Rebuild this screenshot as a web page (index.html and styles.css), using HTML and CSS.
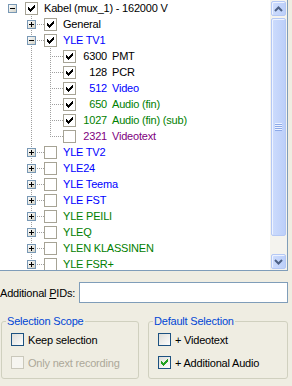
FILE: index.html
```html
<!DOCTYPE html>
<html lang="en">
<head>
    <meta charset="UTF-8">
    <title>Channel Selection</title>
    <link rel="stylesheet" href="styles.css">
</head>
<body>
    <svg class="defs" width="0" height="0">
        <defs>
            <linearGradient id="expg" x1="0" y1="0" x2="1" y2="1">
                <stop offset="0" stop-color="#ffffff"/>
                <stop offset="1" stop-color="#cfcfc4"/>
            </linearGradient>
            <linearGradient id="xpg" x1="0" y1="0" x2="1" y2="1">
                <stop offset="0" stop-color="#dcdcd7"/>
                <stop offset="1" stop-color="#ffffff"/>
            </linearGradient>
        </defs>
        <symbol id="tick" viewBox="0 0 13 13">
            <path d="M3 5h1v3H3zM4 6h1v3H4zM5 7h1v3H5zM6 6h1v3H6zM7 5h1v3H7zM8 4h1v3H8zM9 3h1v3H9z"/>
        </symbol>
        <symbol id="tree-on" viewBox="0 0 13 13">
            <rect x=".5" y=".5" width="12" height="12" fill="#fff" stroke="#a6a395"/>
            <use href="#tick" fill="#000"/>
        </symbol>
        <symbol id="tree-off" viewBox="0 0 13 13">
            <rect x=".5" y=".5" width="12" height="12" fill="#fff" stroke="#a6a395"/>
        </symbol>
        <symbol id="minus" viewBox="0 0 9 9">
            <rect x=".5" y=".5" width="8" height="8" fill="url(#expg)" stroke="#7898b5"/>
            <path d="M2 4h5v1H2z" fill="#000"/>
        </symbol>
        <symbol id="plus" viewBox="0 0 9 9">
            <rect x=".5" y=".5" width="8" height="8" fill="url(#expg)" stroke="#7898b5"/>
            <path d="M2 4h5v1H2zM4 2h1v5H4z" fill="#000"/>
        </symbol>
        <symbol id="xp-off" viewBox="0 0 13 13">
            <rect x=".5" y=".5" width="12" height="12" fill="url(#xpg)" stroke="#1c5180"/>
        </symbol>
        <symbol id="xp-on" viewBox="0 0 13 13">
            <rect x=".5" y=".5" width="12" height="12" fill="url(#xpg)" stroke="#1c5180"/>
            <use href="#tick" fill="#21a121"/>
        </symbol>
        <symbol id="xp-dis" viewBox="0 0 13 13">
            <rect x=".5" y=".5" width="12" height="12" fill="#f6f5f0" stroke="#cac8bb"/>
        </symbol>
    </svg>

    <div class="tree">
        <div class="nodes">
            <!-- root -->
            <div class="node">
                <span class="cell"><svg class="exp"><use href="#minus"/></svg></span>
                <span class="cb"><svg class="chk"><use href="#tree-on"/></svg></span>
                <span class="label">Kabel (mux_1) - 162000 V</span>
            </div>

            <!-- services -->
            <div class="node">
                <span class="cell"></span>
                <span class="cell t"><svg class="exp"><use href="#plus"/></svg></span>
                <span class="cb link"><svg class="chk"><use href="#tree-on"/></svg></span>
                <span class="label">General</span>
            </div>
            <div class="node blue">
                <span class="cell"></span>
                <span class="cell t"><svg class="exp"><use href="#minus"/></svg></span>
                <span class="cb link"><svg class="chk"><use href="#tree-on"/></svg></span>
                <span class="label">YLE TV1</span>
            </div>

            <!-- pids of YLE TV1 -->
            <div class="node">
                <span class="cell"></span><span class="cell v"></span><span class="cell t"></span>
                <span class="cb link"><svg class="chk"><use href="#tree-on"/></svg></span>
                <span class="label"><span class="pid">6300</span>PMT</span>
            </div>
            <div class="node">
                <span class="cell"></span><span class="cell v"></span><span class="cell t"></span>
                <span class="cb link"><svg class="chk"><use href="#tree-on"/></svg></span>
                <span class="label"><span class="pid">128</span>PCR</span>
            </div>
            <div class="node blue">
                <span class="cell"></span><span class="cell v"></span><span class="cell t"></span>
                <span class="cb link"><svg class="chk"><use href="#tree-on"/></svg></span>
                <span class="label"><span class="pid">512</span>Video</span>
            </div>
            <div class="node green">
                <span class="cell"></span><span class="cell v"></span><span class="cell t"></span>
                <span class="cb link"><svg class="chk"><use href="#tree-on"/></svg></span>
                <span class="label"><span class="pid">650</span>Audio (fin)</span>
            </div>
            <div class="node green">
                <span class="cell"></span><span class="cell v"></span><span class="cell t"></span>
                <span class="cb link"><svg class="chk"><use href="#tree-on"/></svg></span>
                <span class="label"><span class="pid">1027</span>Audio (fin) (sub)</span>
            </div>
            <div class="node purple">
                <span class="cell"></span><span class="cell v"></span><span class="cell l"></span>
                <span class="cb link"><svg class="chk"><use href="#tree-off"/></svg></span>
                <span class="label"><span class="pid">2321</span>Videotext</span>
            </div>

            <div class="node blue">
                <span class="cell"></span>
                <span class="cell t"><svg class="exp"><use href="#plus"/></svg></span>
                <span class="cb link"><svg class="chk"><use href="#tree-off"/></svg></span>
                <span class="label">YLE TV2</span>
            </div>
            <div class="node blue">
                <span class="cell"></span>
                <span class="cell t"><svg class="exp"><use href="#plus"/></svg></span>
                <span class="cb link"><svg class="chk"><use href="#tree-off"/></svg></span>
                <span class="label">YLE24</span>
            </div>
            <div class="node blue">
                <span class="cell"></span>
                <span class="cell t"><svg class="exp"><use href="#plus"/></svg></span>
                <span class="cb link"><svg class="chk"><use href="#tree-off"/></svg></span>
                <span class="label">YLE Teema</span>
            </div>
            <div class="node blue">
                <span class="cell"></span>
                <span class="cell t"><svg class="exp"><use href="#plus"/></svg></span>
                <span class="cb link"><svg class="chk"><use href="#tree-off"/></svg></span>
                <span class="label">YLE FST</span>
            </div>
            <div class="node green">
                <span class="cell"></span>
                <span class="cell t"><svg class="exp"><use href="#plus"/></svg></span>
                <span class="cb link"><svg class="chk"><use href="#tree-off"/></svg></span>
                <span class="label">YLE PEILI</span>
            </div>
            <div class="node green">
                <span class="cell"></span>
                <span class="cell t"><svg class="exp"><use href="#plus"/></svg></span>
                <span class="cb link"><svg class="chk"><use href="#tree-off"/></svg></span>
                <span class="label">YLEQ</span>
            </div>
            <div class="node green">
                <span class="cell"></span>
                <span class="cell t"><svg class="exp"><use href="#plus"/></svg></span>
                <span class="cb link"><svg class="chk"><use href="#tree-off"/></svg></span>
                <span class="label">YLEN KLASSINEN</span>
            </div>
            <div class="node green">
                <span class="cell"></span>
                <span class="cell l"><svg class="exp"><use href="#plus"/></svg></span>
                <span class="cb link"><svg class="chk"><use href="#tree-off"/></svg></span>
                <span class="label">YLE FSR+</span>
            </div>
        </div>

        <div class="scroll">
            <div class="sbtn">
                <svg class="arrow" viewBox="0 0 9 6"><path d="M1 5L4.5 1.5L8 5"/></svg>
            </div>
            <div class="thumb"><span class="grip"></span></div>
            <div class="track"></div>
            <div class="sbtn">
                <svg class="arrow" viewBox="0 0 9 6"><path d="M1 1L4.5 4.5L8 1"/></svg>
            </div>
        </div>
    </div>

    <div class="pids">
        <label class="pids-label" for="pids">Additional <u>P</u>IDs:</label>
        <input id="pids" class="pids-input" type="text">
    </div>

    <div class="groups">
        <fieldset class="group">
            <legend>Selection Scope</legend>
            <div class="opt">
                <svg class="xpchk"><use href="#xp-off"/></svg>
                <span>Keep selection</span>
            </div>
            <div class="opt disabled">
                <svg class="xpchk"><use href="#xp-dis"/></svg>
                <span>Only next recording</span>
            </div>
        </fieldset>
        <fieldset class="group">
            <legend>Default Selection</legend>
            <div class="opt">
                <svg class="xpchk"><use href="#xp-off"/></svg>
                <span>+ Videotext</span>
            </div>
            <div class="opt">
                <svg class="xpchk"><use href="#xp-on"/></svg>
                <span>+ Additional Audio</span>
            </div>
        </fieldset>
    </div>
</body>
</html>
```

FILE: styles.css
```css
/* XP style channel selection dialog */
body {
    margin: 0;
    width: 292px;
    height: 386px;
    overflow: hidden;
    background-color: #efede2;
    font-family: "Liberation Sans", Arial, sans-serif;
    font-size: 11px;
    letter-spacing: -0.2px;
    color: #000;
}
.defs {
    display: block;
    width: 0;
    height: 0;
}

/* tree view */
.tree {
    display: flex;
    width: 287px;
    height: 270px;
    background-color: #fff;
    border-right: 1px solid #7f9db9;
    border-bottom: 1px solid #7f9db9;
}
.nodes {
    flex: 1;
    padding-left: 3px;
    overflow: hidden;
}
.node {
    display: flex;
    height: 16px;
    line-height: 16px;
    white-space: nowrap;
}
.node.blue { color: #0000ff; }
.node.green { color: #008000; }
.node.purple { color: #800080; }

.cell {
    flex: none;
    width: 19px;
    height: 16px;
    display: flex;
    justify-content: center;
    align-items: flex-start;
    background-repeat: no-repeat;
}
.cell.v {
    background-image: repeating-linear-gradient(to bottom, #a0a0a0 0 1px, transparent 1px 2px);
    background-size: 1px 16px;
    background-position: 9px 0;
}
.cell.t, .cell.l {
    background-image:
        repeating-linear-gradient(to bottom, #a0a0a0 0 1px, transparent 1px 2px),
        repeating-linear-gradient(to right, #a0a0a0 0 1px, transparent 1px 2px);
    background-size: 1px 16px, 10px 1px;
    background-position: 9px 0, 9px 8px;
}
.cell.l {
    background-size: 1px 8px, 10px 1px;
}
.exp {
    width: 9px;
    height: 9px;
    margin-top: 4px;
}
.cb {
    flex: none;
    width: 16px;
    height: 16px;
    display: flex;
    align-items: flex-start;
}
.cb.link {
    background-image: repeating-linear-gradient(to right, #a0a0a0 0 1px, transparent 1px 2px);
    background-size: 3px 1px;
    background-position: 0 8px;
    background-repeat: no-repeat;
}
.chk {
    width: 13px;
    height: 13px;
    margin: 2px 0 0 3px;
}
.label {
    margin-left: 6px;
}
.pid {
    display: inline-block;
    width: 25px;
    margin-right: 5px;
    text-align: right;
}

/* scrollbar */
.scroll {
    flex: none;
    width: 17px;
    display: flex;
    flex-direction: column;
    background-color: #f4f3ee;
}
.sbtn, .thumb {
    box-sizing: border-box;
    margin: 1px;
    border: 1px solid #b4c8f5;
    border-radius: 2px;
    background: linear-gradient(to right, #cddcfd, #bccff9);
    box-shadow: inset 1px 1px 0 #eef3ff;
    display: flex;
    align-items: center;
    justify-content: center;
}
.sbtn {
    height: 15px;
}
.thumb {
    height: 218px;
}
.track {
    flex: 1;
}
.arrow {
    width: 9px;
    height: 6px;
    fill: none;
    stroke: #4d6185;
    stroke-width: 2;
}
.grip {
    width: 7px;
    height: 8px;
    background: repeating-linear-gradient(to bottom, #eef3ff 0 1px, #8ca9e8 1px 2px);
}

/* additional pids */
.pids {
    display: flex;
    align-items: center;
    width: 288px;
    margin-top: 11px;
}
.pids-label {
    width: 79px;
    flex: none;
}
.pids-input {
    flex: 1;
    min-width: 0;
    height: 21px;
    box-sizing: border-box;
    margin: 0;
    padding: 0 3px;
    border: 1px solid #7f9db9;
    background-color: #fff;
    font: inherit;
}

/* group boxes */
.groups {
    display: grid;
    grid-template-columns: 138px 140px;
    column-gap: 9px;
    margin: 12px 0 0 1px;
}
.group {
    margin: 0;
    min-width: 0;
    padding: 5px 0 9px 9px;
    border: 1px solid #d0d0bf;
    border-radius: 3px;
}
.group legend {
    margin-left: -5px;
    padding: 0 1px;
    line-height: 13px;
    color: #0046d5;
}
.opt {
    display: flex;
    align-items: center;
    gap: 4px;
    height: 13px;
    white-space: nowrap;
}
.opt + .opt {
    margin-top: 10px;
}
.opt.disabled {
    color: #aca899;
}
.xpchk {
    flex: none;
    width: 13px;
    height: 13px;
}
```
